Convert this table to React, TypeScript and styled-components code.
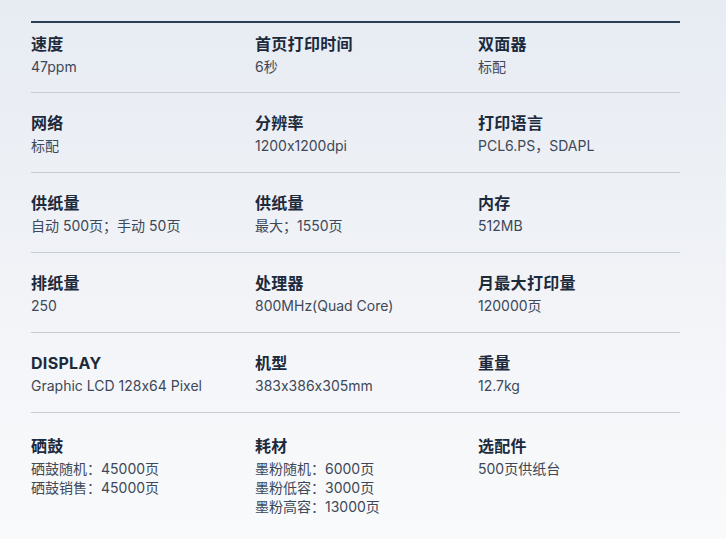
import React from "react";
import styled, { createGlobalStyle } from "styled-components";

const Global = createGlobalStyle`
  html, body { margin: 0; padding: 0; }
  body {
    width: 726px;
    height: 539px;
    overflow: hidden;
    font-family: Inter, "Noto Sans CJK SC", "Noto Sans", sans-serif;
    font-feature-settings: "calt" 0;
    background: linear-gradient(180deg, #e7ecf3 0%, #edf0f5 35%, #f5f6f9 70%, #f9fafb 100%);
  }
`;

const Page = styled.div`
  padding: 21px 46px 0 31px;
`;

const Table = styled.div`
  border-top: 2px solid #2c3e53;
`;

const Row = styled.div<{ $first?: boolean; $last?: boolean }>`
  display: grid;
  grid-template-columns: 224px 223px 1fr;
  padding: ${(p) => (p.$first ? "10px" : p.$last ? "22px" : "19px")} 0 16px;
  border-bottom: ${(p) => (p.$last ? "none" : "1px solid #c7ccd4")};
  height: ${(p) => (p.$first ? "70px" : "80px")};
  box-sizing: border-box;
`;

const Cell = styled.div`
  display: flex;
  flex-direction: column;
  gap: 2px;
`;

const Title = styled.div`
  font-size: 16px;
  line-height: 22px;
  font-weight: 700;
  color: #1c2a3c;
  letter-spacing: 0.3px;
`;

const Value = styled.div`
  font-size: 14px;
  line-height: 19px;
  color: #3d4858;
  white-space: nowrap;
`;

type Item = { t: string; v: string[] };

const rows: Item[][] = [
  [
    { t: "速度", v: ["47ppm"] },
    { t: "首页打印时间", v: ["6秒"] },
    { t: "双面器", v: ["标配"] },
  ],
  [
    { t: "网络", v: ["标配"] },
    { t: "分辨率", v: ["1200x1200dpi"] },
    { t: "打印语言", v: ["PCL6.PS，SDAPL"] },
  ],
  [
    { t: "供纸量", v: ["自动 500页；手动 50页"] },
    { t: "供纸量", v: ["最大；1550页"] },
    { t: "内存", v: ["512MB"] },
  ],
  [
    { t: "排纸量", v: ["250"] },
    { t: "处理器", v: ["800MHz(Quad Core)"] },
    { t: "月最大打印量", v: ["120000页"] },
  ],
  [
    { t: "DISPLAY", v: ["Graphic LCD 128x64 Pixel"] },
    { t: "机型", v: ["383x386x305mm"] },
    { t: "重量", v: ["12.7kg"] },
  ],
  [
    { t: "硒鼓", v: ["硒鼓随机：45000页", "硒鼓销售：45000页"] },
    { t: "耗材", v: ["墨粉随机：6000页", "墨粉低容：3000页", "墨粉高容：13000页"] },
    { t: "选配件", v: ["500页供纸台"] },
  ],
];

export default function App() {
  return (
    <>
      <Global />
      <Page>
        <Table>
          {rows.map((r, i) => (
            <Row key={i} $first={i === 0} $last={i === rows.length - 1}>
              {r.map((c, j) => (
                <Cell key={j}>
                  <Title>{c.t}</Title>
                  <div>
                    {c.v.map((v, k) => (
                      <Value key={k}>{v}</Value>
                    ))}
                  </div>
                </Cell>
              ))}
            </Row>
          ))}
        </Table>
      </Page>
    </>
  );
}
